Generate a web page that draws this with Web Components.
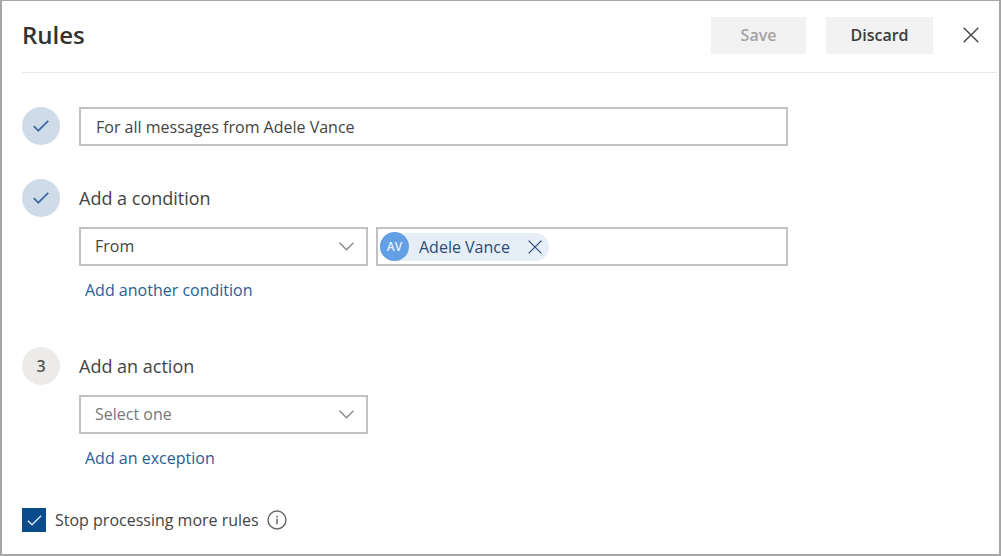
<!DOCTYPE html>
<html lang="en">
<head>
<meta charset="utf-8">
<title>Rules</title>
<style>
  html, body { margin: 0; min-height: 100%; }
  body { font-family: "Open Sans", "Noto Sans", sans-serif; background: #fff; color: #444; }
</style>
</head>
<body>
<rules-panel></rules-panel>
<script>
const define = (name, markup, setup) => {
  const template = document.createElement('template');
  template.innerHTML = '<style>*{box-sizing:border-box}button,input,select{font:inherit;color:inherit;margin:0}svg{display:block;fill:none;stroke:currentColor}</style>' + markup;
  customElements.define(name, class extends HTMLElement {
    constructor() {
      super();
      this.attachShadow({ mode: 'open' }).append(template.content.cloneNode(true));
    }
    connectedCallback() { if (setup) setup(this, this.shadowRoot); }
  });
};

define('rules-button', `
  <style>
    :host { display: block; }
    button { height: 37px; width: 100%; border: 0; background: #f2f2f2; font-size: 16px; font-weight: 600; color: #3b3b3b; padding: 0; }
    button:disabled { color: #a3a3a3; }
  </style>
  <button type="button"><slot></slot></button>`,
  (host, root) => { root.querySelector('button').disabled = host.hasAttribute('disabled'); });

define('close-button', `
  <style>
    :host { display: block; }
    button { display: grid; place-items: center; width: 100%; height: 100%; padding: 0; border: 0; background: none; }
    svg { width: var(--icon-size, 16px); height: var(--icon-size, 16px); }
  </style>
  <button type="button"><svg viewBox="0 0 16 16" stroke-width="1.4"><path d="M.7.7l14.6 14.6M15.3.7L.7 15.3"/></svg></button>`,
  (host, root) => { root.querySelector('button').setAttribute('aria-label', host.getAttribute('label')); });

define('rule-step', `
  <style>
    :host { display: grid; grid-template-columns: 38px minmax(0, 1fr); column-gap: 19px; align-items: start; }
    .badge { display: grid; place-items: center; width: 38px; height: 38px; border-radius: 50%; background: #edebe9; font-size: 16px; font-weight: 600; color: #555; }
    :host([done]) .badge { background: #cfdbe8; color: #3d6da6; }
    svg { width: 16px; height: 12px; }
    :host(:not([done])) svg, :host([done]) .number { display: none; }
  </style>
  <div class="badge"><span class="number"></span><svg viewBox="0 0 16 12" stroke-width="1.8"><path d="M.8 6.2l4.5 4.5L15.2.8"/></svg></div>
  <div><slot></slot></div>`,
  (host, root) => { root.querySelector('.number').textContent = host.getAttribute('number'); });

define('text-field', `
  <style>
    :host { display: block; }
    input { display: block; width: 100%; height: 39px; padding: 0 15px; border: 2px solid #c2c2c2; border-radius: 0; background: #fff; font-size: 16px; }
  </style>
  <input type="text">`,
  (host, root) => {
    const input = root.querySelector('input');
    input.value = host.getAttribute('value');
    input.setAttribute('aria-label', host.getAttribute('label'));
  });

define('drop-down', `
  <style>
    :host { display: grid; align-items: center; }
    select { grid-area: 1 / 1; appearance: none; width: 100%; height: 39px; padding: 0 40px 1px 14px; border: 2px solid #c2c2c2; border-radius: 0; background: #fff; font-size: 16px; }
    :host([placeholder]) select { color: #777; }
    svg { grid-area: 1 / 1; justify-self: end; margin-right: 14px; width: 15px; height: 9px; pointer-events: none; color: #888; }
  </style>
  <select><option></option></select>
  <svg viewBox="0 0 15 9" stroke-width="1.4"><path d="M.6.8l6.9 7 6.9-7"/></svg>`,
  (host, root) => {
    root.querySelector('option').textContent = host.getAttribute('value');
    root.querySelector('select').setAttribute('aria-label', host.getAttribute('label'));
  });

define('person-chip', `
  <style>
    :host { display: flex; align-items: center; height: 28px; border-radius: 14px; background: #e6eef7; color: #2b4a73; font-size: 16px; padding-right: 6px; }
    .avatar { display: grid; place-items: center; width: 29px; height: 29px; border-radius: 50%; background: #629fe4; color: #e8f2fd; font-size: 12px; font-weight: 600; }
    .name { padding: 0 17px 0 10px; white-space: nowrap; }
    close-button { width: 16px; height: 28px; --icon-size: 14px; }
  </style>
  <span class="avatar"></span><span class="name"><slot></slot></span>
  <close-button label="Remove"></close-button>`,
  (host, root) => { root.querySelector('.avatar').textContent = host.getAttribute('initials'); });

define('people-picker', `
  <style>
    :host { display: flex; align-items: center; height: 39px; box-sizing: border-box; padding: 0 2px; border: 2px solid #c2c2c2; background: #fff; }
    input { flex: 1; min-width: 0; height: 100%; padding: 0 8px; border: 0; outline: 0; background: none; font-size: 16px; }
  </style>
  <slot></slot><input type="text" aria-label="People">`);

define('text-link', `
  <style>
    :host { display: block; font-size: 16px; line-height: 24px; }
    a { color: #2a5d96; text-decoration: none; }
  </style>
  <a href="#"><slot></slot></a>`);

define('check-option', `
  <style>
    :host { display: flex; align-items: center; }
    label { display: flex; align-items: center; gap: 9px; font-size: 16px; line-height: 24px; }
    .box { display: grid; place-items: center; }
    input { grid-area: 1 / 1; appearance: none; width: 24px; height: 24px; background: #fff; border: 1px solid #666; }
    input:checked { background: #0b4a8b; border-color: #0b4a8b; }
    .box svg { grid-area: 1 / 1; width: 15px; height: 11px; color: #d8e6f5; pointer-events: none; }
    .info { margin-left: 8px; width: 20px; height: 20px; color: #666; }
  </style>
  <label><span class="box"><input type="checkbox" checked><svg viewBox="0 0 16 12" stroke-width="1.6"><path d="M.8 6.2l4.5 4.5L15.2.8"/></svg></span><slot></slot></label>
  <svg class="info" viewBox="0 0 20 20" stroke-width="1.4"><circle cx="10" cy="10" r="9"/><path d="M10 8.7v5.5M10 5.7v1.7" stroke-width="1.5"/></svg>`);

define('rules-panel', `
  <style>
    :host { display: block; min-height: 100vh; box-sizing: border-box; border: 2px solid #a6a6a6; border-top-width: 1px; padding-left: 20px; background: #fff; }
    header { display: flex; align-items: center; height: 72px; padding: 0 18px 3px 0; border-bottom: 1px solid #e9e9e9; margin-right: 2px; }
    h1 { flex: 1; margin: 0; font-size: 24px; line-height: 32px; font-weight: 600; color: #333; }
    .save { width: 95px; margin-right: 20px; }
    .discard { width: 107px; margin-right: 30px; }
    header close-button { width: 16px; height: 36px; }
    main { display: grid; row-gap: 33px; padding: 34px 20px 20px 0; }
    rule-step { max-width: 766px; }
    h2 { margin: 0 0 10px; font-size: 18px; line-height: 38px; font-weight: 400; }
    .row { display: grid; grid-template-columns: 289px minmax(0, 1fr); gap: 8px; }
    text-link { margin: 12px 0 0 6px; }
    .action { margin-top: 12px; }
    check-option { margin-top: 5px; }
  </style>
  <header>
    <h1>Rules</h1>
    <rules-button class="save" disabled>Save</rules-button>
    <rules-button class="discard">Discard</rules-button>
    <close-button label="Close"></close-button>
  </header>
  <main>
    <rule-step done number="1"><text-field label="Rule name" value="For all messages from Adele Vance"></text-field></rule-step>
    <rule-step done number="2">
      <h2>Add a condition</h2>
      <div class="row">
        <drop-down label="Condition" value="From"></drop-down>
        <people-picker><person-chip initials="AV">Adele Vance</person-chip></people-picker>
      </div>
      <text-link>Add another condition</text-link>
    </rule-step>
    <rule-step class="action" number="3">
      <h2>Add an action</h2>
      <div class="row"><drop-down placeholder label="Action" value="Select one"></drop-down></div>
      <text-link>Add an exception</text-link>
    </rule-step>
    <check-option>Stop processing more rules</check-option>
  </main>`);
</script>
</body>
</html>
